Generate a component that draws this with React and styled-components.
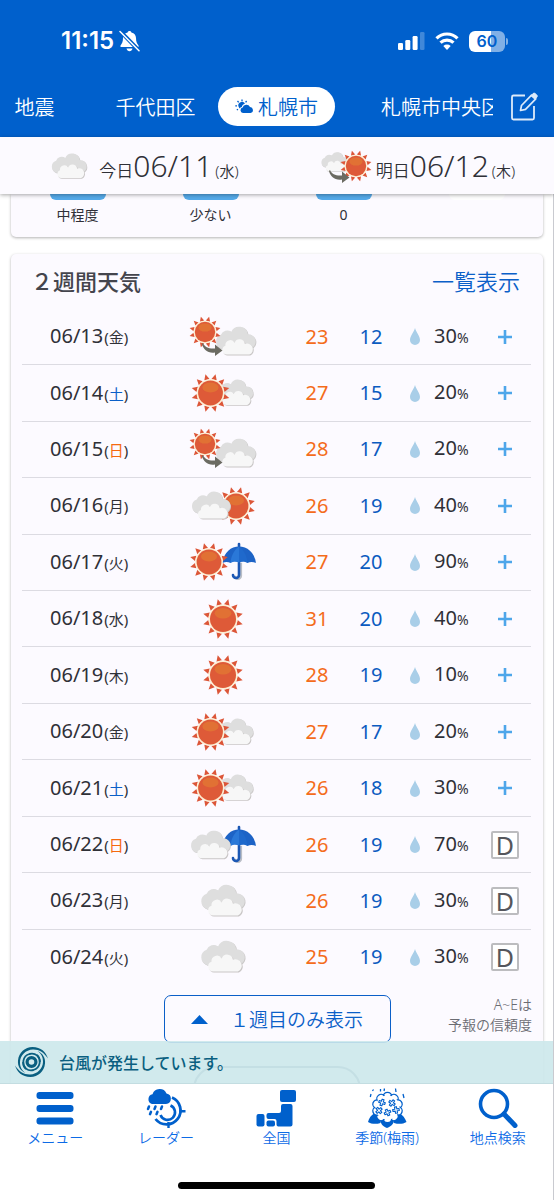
import React from 'react'
import styled, { createGlobalStyle } from 'styled-components'


const GlobalStyle = createGlobalStyle`
    * {
        box-sizing: border-box;
    }

    body {
        margin: 0;
        background-color: #ffffff;
        color: #2f3037;
        font-family: "Noto Sans", "Noto Sans CJK JP", sans-serif;
        font-weight: 350;
    }

    button {
        padding: 0;
        border: none;
        background: none;
        color: inherit;
        font: inherit;
        cursor: pointer;
    }

    a {
        color: inherit;
        text-decoration: none;
    }

    svg {
        display: block;
        flex: none;
    }
`

const Screen = styled.div`
    height: 100vh;
    display: flex;
    flex-direction: column;
`

const Header = styled.header`
    background-color: #0060cc;
    color: white;
`

const StatusBar = styled.div`
    height: 82px;
    padding: 0 46px 0 61px;
    display: flex;
    align-items: center;
    justify-content: space-between;
`

const StatusGroup = styled.div`
    display: flex;
    align-items: center;
    gap: ${({ $gap }) => $gap}px;
`

const Clock = styled.span`
    font-family: Inter, sans-serif;
    font-weight: 600;
    font-size: 24px;
    line-height: 28px;
`

const TabBar = styled.div`
    height: 55px;
    padding-right: 16px;
    padding-bottom: 6px;
    display: flex;
    align-items: center;
    gap: 18px;
`

const Tabs = styled.nav`
    flex: 1;
    min-width: 0;
    overflow: hidden;
    display: flex;
    gap: 4px;

    /* the strip is scrolled so that the first tab is half out of view */
    a:first-child {
        margin-left: -24px;
    }
`

const Tab = styled.a`
    flex: none;
    min-width: 117px;
    height: 39px;
    padding: 0 ${({ $wide }) => ($wide ? 42 : 16)}px;
    border-radius: 20px;
    display: flex;
    align-items: center;
    justify-content: center;
    gap: 4px;
    font-size: 20px;
    white-space: nowrap;
    background-color: ${({ $active }) => ($active ? 'white' : 'transparent')};
    color: ${({ $active }) => ($active ? '#0060cc' : 'white')};
`

const DayBar = styled.div`
    position: relative;
    z-index: 1;
    height: 57px;
    padding-left: 8px;
    background-color: #fcfaff;
    box-shadow: 0 1px 4px rgba(0, 0, 0, .35);
    display: grid;
    grid-template-columns: 1fr 1fr;
`

const Day = styled.a`
    display: flex;
    align-items: center;
    justify-content: center;
    gap: ${({ $gap }) => $gap}px;
`

const DayText = styled.span`
    padding-top: 6px;
    font-size: 17px;
    line-height: 40px;
    white-space: nowrap;

    b {
        font-size: 30px;
        font-weight: 350;
    }

    small {
        font-size: 15px;
        margin-left: 3px;
    }
`

const Main = styled.main`
    position: relative;
    flex: 1;
    min-height: 0;
    overflow: hidden;
    padding: 0 10px 0 11px;
    border-right: 1px solid #c9cad0;
`

const Card = styled.section`
    background-color: #fcfaff;
    border-radius: ${({ $cut }) => ($cut ? '0 0 5px 5px' : '5px')};
    box-shadow: 0 1px 3px rgba(0, 0, 0, .3);
    margin-bottom: 17px;
`

const IndexList = styled.div`
    height: 43px;
    display: grid;
    grid-template-columns: repeat(4, 1fr);
    justify-items: center;
`

const IndexItem = styled.div`
    text-align: center;
    font-size: 14px;
    font-weight: 400;
    line-height: 30px;
`

const IndexBadge = styled.div`
    width: 56px;
    height: 6px;
    border-radius: 0 0 6px 6px;
    background-color: ${({ $empty }) => ($empty ? '#ffffff' : '#55aaea')};
`

const CardHeader = styled.div`
    height: 55px;
    padding: 0 23px 4px 20px;
    display: flex;
    align-items: center;
    justify-content: space-between;
    font-size: 22px;

    h2 {
        margin: 0;
        font-size: 22px;
        font-weight: 500;
        color: #44454d;
    }

    a {
        color: #0b5fc8;
    }
`

const TableWrap = styled.div`
    padding: 0 12px 0 11px;
`

const ForecastTable = styled.table`
    width: 100%;
    height: 676px;
    table-layout: fixed;
    border-collapse: collapse;
    font-size: 20px;
    line-height: 28px;

    td, th {
        padding: 0;
        text-align: center;
        font-weight: 400;
    }

    tr + tr {
        border-top: 1px solid #dcdbe2;
    }
`

const Col = styled.col`
    width: ${({ $w }) => $w}px;
`

const DateCell = styled.th`
    && {
        text-align: left;
        padding-left: 28px;
        white-space: nowrap;
    }

    small {
        font-size: 15px;
        margin-left: 1px;
    }
`

const Weekday = styled.span`
    color: ${({ $name }) => ({ '土': '#0b5fc8', '日': '#f5690f' }[$name] || 'inherit')};
`

const TempCell = styled.td`
    color: ${({ $high }) => ($high ? '#f46c1b' : '#0b5bc0')};
`

const Centered = styled.div`
    display: flex;
    align-items: center;
    justify-content: center;
`

const Rain = styled.div`
    display: flex;
    align-items: center;
    gap: 14px;
    padding-left: 12px;

    small {
        font-size: 14px;
    }
`

const Reliability = styled.span`
    width: 28px;
    height: 28px;
    border: 2px solid #bcbcbf;
    border-radius: 2px;
    background-color: white;
    color: #55565c;
    font-size: 25px;
    line-height: 24px;
`

const CardFooter = styled.div`
    padding: 10px 11px 0;
    display: grid;
    grid-template-columns: 1fr auto 1fr;
`

const ToggleButton = styled.button`
    && {
        grid-column: 2;
        width: 227px;
        height: 48px;
        border: 1px solid #0b5fc8;
        border-radius: 7px;
        background-color: #fcfaff;
        color: #0b5fc8;
        font-size: 19px;
        display: flex;
        align-items: center;
        justify-content: center;
        gap: 22px;
    }
`

const FootNote = styled.p`
    margin: 0;
    text-align: right;
    font-size: 14px;
    line-height: 20px;
    color: #6b6c73;
`

const MoreRow = styled.div`
    height: 80px;
    padding-top: 23px;
    display: flex;
    justify-content: center;
`

const MoreButton = styled.button`
    && {
        width: 168px;
        height: 46px;
        border: 2px solid #7d8fa0;
        border-radius: 23px;
        display: flex;
        align-items: center;
        justify-content: center;
    }
`

const Notice = styled.a`
    position: absolute;
    left: 0;
    right: 0;
    bottom: 0;
    height: 43px;
    padding-left: 14px;
    border-bottom: 1px solid #c3dde1;
    background-color: rgba(204, 232, 235, .9);
    color: #0a5f80;
    font-size: 16px;
    font-weight: 500;
    display: flex;
    align-items: center;
    gap: 10px;
`

const BottomNav = styled.nav`
    height: 98px;
    border-right: 1px solid #c9cad0;
    display: grid;
    grid-template-columns: repeat(5, 1fr);
`

const NavItem = styled.a`
    padding-top: 4px;
    display: flex;
    flex-direction: column;
    align-items: center;
    font-size: 14px;
    line-height: 20px;
    color: #0d6be6;
`

const HomeArea = styled.div`
    height: 18px;
    border-right: 1px solid #c9cad0;
    display: flex;
    justify-content: center;
`

const HomeIndicator = styled.div`
    width: 197px;
    height: 7px;
    border-radius: 4px;
    background-color: black;
`


const RAYS = [0, 30, 60, 90, 120, 150, 180, 210, 240, 270, 300, 330]

function Sun({ x, y, s = 1 }) {
    return (
        <g transform={`translate(${x} ${y}) scale(${s})`}>
            {RAYS.map(a => (
                <path key={a} transform={`rotate(${a + 15})`} d="M-2.7 -13.8 L0 -19.4 L2.7 -13.8Z" fill="#dc5638" />
            ))}
            <circle r="13.8" fill="#fdeed2" />
            <circle r="12.4" fill="#de5a38" />
            <ellipse cx="0" cy="-5.5" rx="8" ry="5" fill="#e27b33" opacity=".7" />
        </g>
    )
}

function CloudShape({ fill, front }) {
    return front ? (
        <path fill={fill} d="M14 32.5 a5 5 0 0 1 -1.5 -9.7 a5.5 5.5 0 0 1 10.2 -3.4 a5.8 5.8 0 0 1 11.2 1.4 a6.2 6.2 0 0 1 5 11.7Z" />
    ) : (
        <path fill={fill} d="M8 26 A8 8 0 0 1 7.600 10.800 A7.600 7.600 0 0 1 19 7.400 A9.600 9.600 0 0 1 37.200 10.200 A8 8 0 0 1 41 25.500 Z" />
    )
}

function Cloud({ x, y, s = 1 }) {
    return (
        <g transform={`translate(${x} ${y}) scale(${s})`}>
            <g transform="translate(.8 .8)"><CloudShape fill="#cbc9c9" /></g>
            <CloudShape fill="#dedede" />
            <g transform="translate(1 1)"><CloudShape front fill="#c9c6c6" /></g>
            <CloudShape front fill="#f7f7f7" />
        </g>
    )
}

function Umbrella({ x, y }) {
    return (
        <g transform={`translate(${x} ${y})`}>
            <path d="M1 18 V31 a3 3 0 0 1 -6 0" fill="none" stroke="#b9bdc6" strokeWidth="2.6" transform="translate(.8 .8)" />
            <path d="M0 0 V31 a3 3 0 0 1 -6 0" fill="none" stroke="#1b57b4" strokeWidth="2.6" strokeLinecap="round" />
            <path d="M-16.5 19 C-15 8 -8 2.5 0 2.5 C8 2.5 15.500 8 17 19 C14 17.500 11 17.500 8.500 19 C6 17.200 3 17 0 18.500 C-3 17 -6 17.200 -8.500 19 C-11 17.500 -14 17.500 -16.500 19Z" fill="#1d63c6" />
            <path d="M0 2.500 C-5 6 -8 12 -8.500 19 C-6 17.200 -3 17 0 18.500Z" fill="#2a78d8" />
            <path d="M0 2.500 C5 6 8 12 8.500 19 C6 17.200 3 17 0 18.500Z" fill="#1f69cc" />
        </g>
    )
}

function Arrow({ x, y }) {
    return (
        <g transform={`translate(${x} ${y})`} fill="#6b6b62">
            <path d="M0 0 C2 4.500 6 6 12 5.500 V1.500 L19.500 7.500 L12 13 V9.500 C5 10.500 0.500 7 -1 1Z" />
        </g>
    )
}

const WEATHER = {
    sunLaterCloud: <><Cloud x={31} y={10} s={0.91} /><Sun x={22} y={17} s={0.82} /><Arrow x={20} y={28} /></>,
    sunCloud: <><Cloud x={32} y={7} s={0.83} /><Sun x={27.500} y={22} /></>,
    cloudSun: <><Sun x={53} y={22} /><Cloud x={7} y={6} s={0.88} /></>,
    sunUmbrella: <><Umbrella x={56} y={4} /><Sun x={26} y={22} /></>,
    cloudUmbrella: <><Umbrella x={56} y={4} /><Cloud x={6} y={6} s={0.9} /></>,
    sun: <Sun x={40} y={22} s={1.05} />,
    cloud: <Cloud x={16} y={4} />,
}

function WeatherIcon({ name }) {
    return (
        <svg width="80" height="44" viewBox="0 0 80 44">{WEATHER[name]}</svg>
    )
}

function DropIcon() {
    return (
        <svg width="10" height="17" viewBox="0 0 10 17">
            <path d="M5 0 C6 4 10 8 10 12 a5 5 0 0 1 -10 0 C0 8 4 4 5 0Z" fill="#a9cee8" />
        </svg>
    )
}

function PlusIcon() {
    return (
        <svg width="14" height="14" viewBox="0 0 14 14">
            <path d="M7 0 V14 M0 7 H14" stroke="#4ea6ea" strokeWidth="2.6" />
        </svg>
    )
}

function BellOffIcon() {
    return (
        <svg width="21" height="22" viewBox="0 0 21 22">
            <path d="M10.500 1 C11.500 1 12.300 1.700 12.400 2.500 C15.500 3.300 17 5.500 17 8 C17 12 18 13.500 19.500 15.500 V17 H1.500 V15.500 C3 13.500 4 12 4 8 C4 5.500 5.500 3.300 8.600 2.500 C8.700 1.700 9.500 1 10.500 1Z" fill="white" />
            <path d="M7.500 18.500 H13.500 C13 20.500 12 21.200 10.500 21.200 C9 21.200 8 20.500 7.500 18.500Z" fill="white" />
            <path d="M0.500 0.500 L20 20.500" stroke="#0060cc" strokeWidth="4" />
            <path d="M1 1.500 L20 20.800" stroke="white" strokeWidth="1.500" strokeLinecap="round" />
        </svg>
    )
}

function SignalIcon() {
    return (
        <svg width="27" height="18" viewBox="0 0 27 18" fill="white">
            <rect x="0" y="11" width="5" height="7" rx="1.300" />
            <rect x="7.300" y="8" width="5" height="10" rx="1.300" />
            <rect x="14.600" y="4" width="5" height="14" rx="1.300" />
            <rect x="22" y="0" width="4.500" height="18" rx="1.300" opacity=".25" />
        </svg>
    )
}

function WifiIcon() {
    return (
        <svg width="24" height="18" viewBox="0 0 24 18" fill="none" stroke="white" strokeWidth="3.200">
            <path d="M1.500 6.300 A15 15 0 0 1 22.500 6.300" />
            <path d="M5.500 10.700 A9.500 9.500 0 0 1 18.500 10.700" />
            <path d="M12 18 L8.300 14 A5.500 5.500 0 0 1 15.700 14Z" fill="white" stroke="none" />
        </svg>
    )
}

const Battery = styled.span`
    width: 36px;
    height: 21px;
    border-radius: 6px;
    background: linear-gradient(to right, #ffffff 60%, #80b0e6 60%);
    color: #0060cc;
    font-family: Inter, sans-serif;
    font-size: 16px;
    font-weight: 600;
    line-height: 21px;
    text-align: center;
`

const BatteryTip = styled.span`
    width: 2px;
    height: 7px;
    border-radius: 0 2px 2px 0;
    background-color: #80b0e6;
`

function PartlyIcon() {
    return (
        <svg width="19" height="15" viewBox="0 0 19 15" fill="#0060cc">
            <path d="M4 8.500 A3.500 3.500 0 0 1 10 4.500 C8 5.500 7 6.500 6.800 8 C5.800 8.200 5 8.800 4.600 9.500Z" />
            <path d="M7 0.500 V2.300 M2.500 2 L3.700 3.400 M0.300 6.800 H2 M11.600 2 L10.600 3.400 M1.800 11 L3 10.200" stroke="#0060cc" strokeWidth="1.300" />
            <path d="M8 14 a2.800 2.800 0 0 1 -.4 -5.500 a4 4 0 0 1 7.400 -.6 a3.100 3.100 0 0 1 .6 6.100Z" />
        </svg>
    )
}

function EditIcon() {
    return (
        <svg width="27" height="29" viewBox="0 0 27 29" fill="none" stroke="#dceafa">
            <path d="M14 3.500 H2.500 A1.500 1.500 0 0 0 1 5 V26 A1.500 1.500 0 0 0 2.500 27.500 H21.500 A1.500 1.500 0 0 0 23 26 V14" strokeWidth="1.800" />
            <path d="M9.500 18.500 L10.500 13.500 L20.500 3.200 L24.800 6.800 L14.500 17.300Z" strokeWidth="1.700" strokeLinejoin="round" />
            <path d="M20 3.700 L22 1.600 a1.600 1.600 0 0 1 2.200 0 L25.800 3 a1.600 1.600 0 0 1 0 2.200 L24 7.300Z" fill="#dceafa" />
        </svg>
    )
}

function TyphoonIcon() {
    return (
        <svg width="35" height="34" viewBox="0 0 35 34" fill="none" stroke="#0a5f80">
            <circle cx="17.500" cy="17" r="4.400" strokeWidth="3.200" />
            <path d="M12 24 C7.500 19.500 8.500 11 15.500 9 C21.500 7.600 26 11.500 25.800 17" strokeWidth="1.800" />
            <path d="M23 10 C27.500 14.500 26.500 23 19.500 25 C13.500 26.400 9 22.500 9.200 17" strokeWidth="1.800" />
            <path d="M11.500 28 C6 25.500 3.500 21 4 15.500 C4.800 7.500 11 2 18.500 2 C27 2 32 7 34 13.500 C30 7.500 25 4.300 19 4.500 C11.500 4.800 6.300 10.500 6 17 C5.800 22 8 25.500 11.500 28Z" fill="#0a5f80" stroke="none" />
            <path d="M23.500 6 C29 8.500 31.500 13 31 18.500 C30.200 26.500 24 32 16.500 32 C8 32 3 27 1 20.500 C5 26.500 10 29.700 16 29.500 C23.500 29.200 28.700 23.500 29 17 C29.200 12 27 8.500 23.500 6Z" fill="#0a5f80" stroke="none" />
        </svg>
    )
}

function MenuIcon() {
    return (
        <svg width="40" height="40" viewBox="0 0 40 40" fill="#0060cc">
            <rect x="1.500" y="4" width="37" height="7" rx="3" />
            <rect x="1.500" y="17" width="37" height="7" rx="3" />
            <rect x="1.500" y="29.500" width="37" height="7" rx="3" />
        </svg>
    )
}

function RadarIcon() {
    return (
        <svg width="40" height="40" viewBox="0 0 40 40" fill="none" stroke="#0060cc">
            <path d="M26 9.500 A14 14 0 1 1 9.500 31" strokeWidth="2.800" />
            <path d="M24.500 17.500 A7.500 7.500 0 1 1 14.500 27" strokeWidth="2.600" />
            <path d="M33 23.300 H39.500 M22.500 34 V40" strokeWidth="2.400" />
            <path d="M6 16 A5 5 0 0 1 6.500 6.300 A7.500 7.500 0 0 1 20.500 5.500 A5.300 5.300 0 0 1 20 16Z" fill="#0060cc" stroke="none" />
            <path d="M3 18.500 L2 21 M9.500 18.500 L8.500 21 M16 18.500 L15 21 M5 23.800 L4 26.200 M11.500 23.800 L10.500 26.200" strokeWidth="2.500" strokeLinecap="round" />
        </svg>
    )
}

function JapanIcon() {
    return (
        <svg width="40" height="40" viewBox="0 0 40 40" fill="#0060cc">
            <rect x="24" y="2" width="16" height="12" rx="2" />
            <path d="M27 16 H34.500 a2 2 0 0 1 2 2 V36.500 a2 2 0 0 1 -2 2 H22 a2 2 0 0 1 -1.500 -2 V33 a2 2 0 0 0 -2 -2 H12.500 a2 2 0 0 1 -2 -2 V27 a2 2 0 0 1 2 -2 H23 a2 2 0 0 0 2 -2 V18 a2 2 0 0 1 2 -2Z" />
            <rect x="10.500" y="32.500" width="8.500" height="6" rx="2" />
            <rect x="0.500" y="26" width="8" height="12.500" rx="2" />
        </svg>
    )
}

const LOBES = [0, 36, 72, 108, 144, 180, 216, 252, 288, 324]
const PETALS = [[15, 14.500], [25, 15], [12, 22.500], [20.500, 24.500], [29, 22]]

function HydrangeaIcon() {
    return (
        <svg width="40" height="40" viewBox="0 0 40 40" fill="none" stroke="#0060cc">
            <path d="M6.500 1.500 L5.500 3 M4 6 L3.300 9 M13.500 1 V3.500 M17.500 .5 L17 3 M28.500 .5 L29 4 M36 6 L37 10" strokeWidth="1.300" />
            <path d="M1 34 C2 30 4 27 8 25 C12 28 14 31 13.500 35 C9 36.500 4 36 1 34Z M39.500 34 C38 30 36 27 32 25 C28 28 26 31 27 35 C32 36.500 36 36 39.500 34Z M20 40 C15 38 12.500 34.500 14 30 H27 C28 34.500 25 38 20 40Z" fill="#0060cc" stroke="none" />
            {LOBES.map(a => (
                <circle key={a} transform={`translate(20.5 19.5) rotate(${a})`} cx="0" cy="-11" r="4.200" fill="white" strokeWidth="1.300" />
            ))}
            <circle cx="20.500" cy="19.500" r="12" fill="white" stroke="none" />
            {PETALS.map(([x, y], i) => (
                <path key={i} transform={`translate(${x} ${y}) rotate(${20 + i * 15})`} d="M-1 -1 V-3.200 H1 V-1 H3.200 V1 H1 V3.200 H-1 V1 H-3.200 V-1Z" strokeWidth="1.100" strokeLinejoin="round" />
            ))}
        </svg>
    )
}

function SearchIcon() {
    return (
        <svg width="40" height="40" viewBox="0 0 40 40" fill="none" stroke="#0060cc">
            <circle cx="16" cy="16" r="13.500" strokeWidth="3.600" />
            <path d="M26 26 L37 37.500" strokeWidth="5" strokeLinecap="round" />
        </svg>
    )
}


const FORECAST = [
    ['06/13', '金', 'sunLaterCloud', 23, 12, 30],
    ['06/14', '土', 'sunCloud', 27, 15, 20],
    ['06/15', '日', 'sunLaterCloud', 28, 17, 20],
    ['06/16', '月', 'cloudSun', 26, 19, 40],
    ['06/17', '火', 'sunUmbrella', 27, 20, 90],
    ['06/18', '水', 'sun', 31, 20, 40],
    ['06/19', '木', 'sun', 28, 19, 10],
    ['06/20', '金', 'sunCloud', 27, 17, 20],
    ['06/21', '土', 'sunCloud', 26, 18, 30],
    ['06/22', '日', 'cloudUmbrella', 26, 19, 70, 'D'],
    ['06/23', '月', 'cloud', 26, 19, 30, 'D'],
    ['06/24', '火', 'cloud', 25, 19, 30, 'D'],
]

const NAV = [
    ['メニュー', MenuIcon],
    ['レーダー', RadarIcon],
    ['全国', JapanIcon],
    ['季節(梅雨)', HydrangeaIcon],
    ['地点検索', SearchIcon],
]


function ForecastRow({ row }) {
    const [date, weekday, icon, high, low, rain, grade] = row

    return (
        <tr>
            <DateCell scope="row">
                {date}<small>(<Weekday $name={weekday}>{weekday}</Weekday>)</small>
            </DateCell>
            <td><Centered><WeatherIcon name={icon} /></Centered></td>
            <TempCell $high>{high}</TempCell>
            <TempCell>{low}</TempCell>
            <td>
                <Rain>
                    <DropIcon />
                    <span>{rain}<small>%</small></span>
                </Rain>
            </td>
            <td>
                <Centered>
                    {grade
                        ? <Reliability>{grade}</Reliability>
                        : <button type="button" aria-label={`${date} 詳細`}><PlusIcon /></button>}
                </Centered>
            </td>
        </tr>
    )
}

function App() {
    return (
        <Screen>
            <GlobalStyle />

            <Header>
                <StatusBar>
                    <StatusGroup $gap={5}>
                        <Clock>11:15</Clock>
                        <BellOffIcon />
                    </StatusGroup>
                    <StatusGroup $gap={10}>
                        <SignalIcon />
                        <WifiIcon />
                        <StatusGroup $gap={1}>
                            <Battery>60</Battery>
                            <BatteryTip />
                        </StatusGroup>
                    </StatusGroup>
                </StatusBar>

                <TabBar>
                    <Tabs>
                        <Tab href="#quake">地震</Tab>
                        <Tab href="#chiyoda">千代田区</Tab>
                        <Tab href="#sapporo" $active><PartlyIcon />札幌市</Tab>
                        <Tab href="#sapporo-chuo" $wide>札幌市中央区</Tab>
                    </Tabs>
                    <button type="button" aria-label="編集"><EditIcon /></button>
                </TabBar>
            </Header>

            <DayBar>
                <Day href="#today" $gap={9}>
                    <svg width="40" height="28" viewBox="0 0 40 28"><Cloud x={0} y={0} s={0.8} /></svg>
                    <DayText>今日<b>06/11</b><small>(水)</small></DayText>
                </Day>
                <Day href="#tomorrow" $gap={4}>
                    <svg width="52" height="34" viewBox="0 0 52 34">
                        <Cloud x={0} y={2} s={0.62} />
                        <Sun x={36} y={17} s={0.82} />
                        <Arrow x={10} y={21} />
                    </svg>
                    <DayText>明日<b>06/12</b><small>(木)</small></DayText>
                </Day>
            </DayBar>

            <Main>
                <Card $cut>
                    <IndexList>
                        <IndexItem><IndexBadge />中程度</IndexItem>
                        <IndexItem><IndexBadge />少ない</IndexItem>
                        <IndexItem><IndexBadge />0</IndexItem>
                        <IndexItem><IndexBadge $empty /></IndexItem>
                    </IndexList>
                </Card>

                <Card>
                    <CardHeader>
                        <h2>２週間天気</h2>
                        <a href="#list">一覧表示</a>
                    </CardHeader>

                    <TableWrap>
                        <ForecastTable>
                            <colgroup>
                                <col />
                                <Col $w={134} />
                                <Col $w={54} />
                                <Col $w={54} />
                                <Col $w={81} />
                                <Col $w={52} />
                            </colgroup>
                            <tbody>
                                {FORECAST.map(row => <ForecastRow key={row[0]} row={row} />)}
                            </tbody>
                        </ForecastTable>
                    </TableWrap>

                    <CardFooter>
                        <ToggleButton type="button">
                            <svg width="17" height="9" viewBox="0 0 17 9"><path d="M8.500 0 L17 9 H0Z" fill="#0060cc" /></svg>
                            １週目のみ表示
                        </ToggleButton>
                        <FootNote>A~Eは<br />予報の信頼度</FootNote>
                    </CardFooter>

                    <MoreRow>
                        <MoreButton type="button" aria-label="もっと見る">
                            <svg width="14" height="8" viewBox="0 0 14 8"><path d="M1 1 L7 7 L13 1" fill="none" stroke="#7d8fa0" /></svg>
                        </MoreButton>
                    </MoreRow>
                </Card>

                <Notice href="#typhoon">
                    <TyphoonIcon />
                    台風が発生しています。
                </Notice>
            </Main>

            <BottomNav>
                {NAV.map(([label, Icon]) => (
                    <NavItem key={label} href="#">
                        <Icon />
                        {label}
                    </NavItem>
                ))}
            </BottomNav>
            <HomeArea><HomeIndicator /></HomeArea>
        </Screen>
    )
}

export default App
